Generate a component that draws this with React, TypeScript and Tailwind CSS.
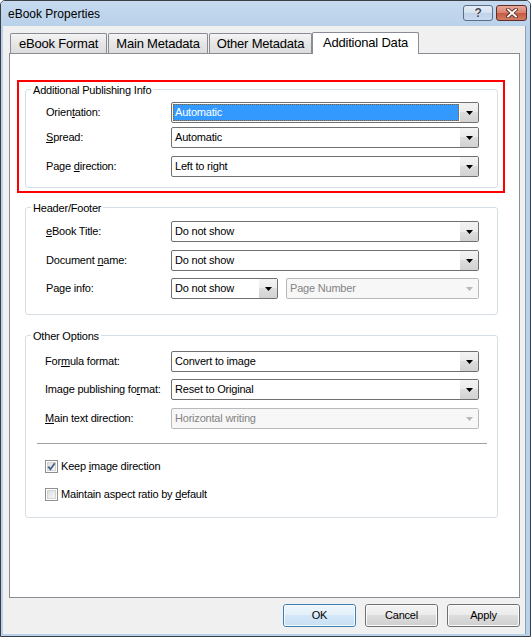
import React from "react";

const FONT = "font-['Liberation_Sans',Arial,sans-serif]";

function Mn({ children }: { children: React.ReactNode }) {
  return <span className="underline decoration-1 underline-offset-[1px]">{children}</span>;
}

function DownArrow({ disabled }: { disabled?: boolean }) {
  return (
    <svg width="7" height="4" viewBox="0 0 7 4" className="block">
      <path d="M0 0H7L3.5 4Z" fill={disabled ? "#b8b8b8" : "#000"} />
    </svg>
  );
}

function Combo({
  value,
  className,
  selected,
  disabled,
}: {
  value: string;
  className: string;
  selected?: boolean;
  disabled?: boolean;
}) {
  return (
    <div
      className={`flex h-[21px] shrink-0 rounded-[2px] border ${
        disabled ? "border-[#b6babd] bg-[#f7f7f7] text-[#848484]" : "border-[#707070] bg-white text-black"
      } ${className}`}
    >
      <div className="flex min-w-0 flex-1 p-px">
        <div
          className={`flex flex-1 items-center whitespace-nowrap ${
            selected ? "border border-dotted border-[#a05a00] bg-[#3399ff] pl-[1px] text-white" : "pl-[2px]"
          }`}
        >
          {value}
        </div>
      </div>
      <div
        className={`flex w-[18px] items-center justify-center ${
          disabled ? "bg-[#f7f7f7]" : "bg-[linear-gradient(#f3f3f3,#ebebeb_50%,#dddddd_50%,#d2d2d2)]"
        }`}
      >
        <DownArrow disabled={disabled} />
      </div>
    </div>
  );
}

function Group({
  title,
  className,
  children,
}: {
  title: string;
  className: string;
  children: React.ReactNode;
}) {
  return (
    <div className={`relative w-[473px] rounded-[3px] border border-[#d5dfe5] ${className}`}>
      <span className="absolute left-[5px] top-[-7px] bg-white px-[2px] leading-[14px]">{title}</span>
      {children}
    </div>
  );
}

function Row({
  label,
  children,
  className = "",
}: {
  label: React.ReactNode;
  children: React.ReactNode;
  className?: string;
}) {
  return (
    <div className={`flex items-center ${className}`}>
      <div className="w-[125px] shrink-0 whitespace-nowrap">{label}</div>
      {children}
    </div>
  );
}

function CheckBox({ checked, label, className = "" }: { checked?: boolean; label: React.ReactNode; className?: string }) {
  return (
    <div className={`flex h-[13px] items-center ${className}`}>
      <div className="flex h-[13px] w-[13px] shrink-0 border border-[#8e8f8f] bg-white p-px">
        <div className="relative flex-1 border border-[#d2d4d6] bg-[linear-gradient(135deg,#dcdee0,#f8f8f8)]">
          {checked && (
            <svg width="11" height="11" viewBox="0 0 11 11" className="absolute left-[-2px] top-[-2px]">
              <path d="M2.2 5.6L4.4 8.2L8.8 2.2" fill="none" stroke="#4f6489" strokeWidth="1.9" />
            </svg>
          )}
        </div>
      </div>
      <span className="ml-[3px] whitespace-nowrap">{label}</span>
    </div>
  );
}

function DialogButton({ children, primary }: { children: React.ReactNode; primary?: boolean }) {
  return (
    <div
      className={`flex h-[23px] w-[73px] items-center justify-center rounded-[3px] border ${
        primary
          ? "border-[#3c7fb1] bg-[linear-gradient(#eef6fc,#e2eff9_50%,#d3e7f7_50%,#c8e0f4)]"
          : "border-[#707070] bg-[linear-gradient(#f3f3f3,#ebebeb_50%,#dddddd_50%,#cfcfcf)]"
      }`}
    >
      <div
        className={`flex h-full w-full items-center justify-center rounded-[2px] border ${
          primary ? "border-[#f4faff]" : "border-[#fafafa]"
        }`}
      >
        {children}
      </div>
    </div>
  );
}

function Tab({ label, className }: { label: string; className: string }) {
  return (
    <div
      className={`flex h-[20px] shrink-0 items-center justify-center rounded-t-[2px] border border-b-0 border-[#898c95] bg-[linear-gradient(#f4f4f4,#e6e6e6_50%,#dcdcdc)] pb-[1px] text-[13px] ${className}`}
    >
      {label}
    </div>
  );
}

export default function App() {
  return (
    <div
      className={`${FONT} flex h-[637px] w-[531px] flex-col overflow-hidden rounded-t-[5px] border border-[#3a3f45] bg-[#b9d1ea] text-[11px] leading-[13px] tracking-[-0.2px] text-black`}
    >
      {/* title bar */}
      <div className="flex h-[25px] shrink-0 items-start bg-[linear-gradient(#c6daef,#b9d1ea)] pl-[7px] pr-[3px]">
        <div className="mt-[6px] text-[12px] leading-[14px] tracking-normal">eBook Properties</div>
        <div className="ml-auto mt-[4px] flex gap-[3px]">
          <div className="flex h-[16px] w-[30px] items-center justify-center rounded-[3px] border border-[#5c6e86] bg-[linear-gradient(#e4edf7,#d3e1f0_50%,#bfd2e8_50%,#c9dbef)]">
            <span className="text-[12px] font-bold leading-[12px] text-[#3c4652] [text-shadow:0_0_1px_#fff,0_0_1px_#fff]">
              ?
            </span>
          </div>
          <div className="flex h-[16px] w-[31px] items-center justify-center rounded-[3px] border border-[#5e2d25] bg-[linear-gradient(#e8a898,#d9806c_50%,#c65a43_50%,#d27a62)]">
            <svg width="12" height="10" viewBox="0 0 12 10" className="block">
              <path d="M2 1.5L10 8.5M10 1.5L2 8.5" stroke="#5a2a22" strokeWidth="3.6" strokeLinecap="square" />
              <path d="M2 1.5L10 8.5M10 1.5L2 8.5" stroke="#fff" strokeWidth="1.8" strokeLinecap="square" />
            </svg>
          </div>
        </div>
      </div>

      {/* frame + client area */}
      <div className="flex min-h-0 flex-1">
        <div className="w-[2px] shrink-0" />
        <div className="flex w-[522px] shrink-0 flex-col bg-[#f0f0f0] pt-[6px]">
          {/* tabs */}
          <div className="flex h-[21px] items-end pl-[7px]">
            <Tab label="eBook Format" className="w-[97px]" />
            <Tab label="Main Metadata" className="ml-[1px] w-[100px]" />
            <Tab label="Other Metadata" className="ml-[1px] w-[103px]" />
            <div className="relative z-10 -mb-px flex h-[22px] w-[107px] shrink-0 items-center justify-center rounded-t-[2px] border border-b-0 border-[#898c95] bg-white pb-[2px] text-[13px]">
              Additional Data
            </div>
          </div>

          {/* tab page */}
          <div className="ml-[6px] flex h-[545px] w-[511px] flex-col border border-[#898c95] bg-white">
            <div className="ml-[7px] mt-[26px] w-[488px] border-2 border-[#ff0000] pb-[3px] pt-[7px]">
              <Group title="Additional Publishing Info" className="ml-[6px] pb-[10px] pl-[20px] pt-[12px]">
                <Row
                  label={
                    <>
                      Orien<Mn>t</Mn>ation:
                    </>
                  }
                >
                  <Combo value="Automatic" selected className="w-[308px]" />
                </Row>
                <Row
                  className="mt-[4px]"
                  label={
                    <>
                      <Mn>S</Mn>pread:
                    </>
                  }
                >
                  <Combo value="Automatic" className="w-[308px]" />
                </Row>
                <Row
                  className="mt-[8px]"
                  label={
                    <>
                      Page <Mn>d</Mn>irection:
                    </>
                  }
                >
                  <Combo value="Left to right" className="w-[308px]" />
                </Row>
              </Group>
            </div>

            <Group title="Header/Footer" className="ml-[15px] mt-[14px] pb-[15px] pl-[20px] pt-[13px]">
              <Row
                label={
                  <>
                    <Mn>e</Mn>Book Title:
                  </>
                }
              >
                <Combo value="Do not show" className="w-[308px]" />
              </Row>
              <Row
                className="mt-[8px]"
                label={
                  <>
                    Document <Mn>n</Mn>ame:
                  </>
                }
              >
                <Combo value="Do not show" className="w-[308px]" />
              </Row>
              <Row className="mt-[7px]" label="Page info:">
                <Combo value="Do not show" className="w-[107px]" />
                <Combo value="Page Number" disabled className="ml-[8px] w-[193px]" />
              </Row>
            </Group>

            <Group title="Other Options" className="ml-[15px] mt-[20px] pb-[16px] pl-[19px] pt-[15px]">
              <Row
                label={
                  <>
                    For<Mn>m</Mn>ula format:
                  </>
                }
                className="[&>div:first-child]:w-[126px]"
              >
                <Combo value="Convert to image" className="w-[308px]" />
              </Row>
              <Row
                className="mt-[7px] [&>div:first-child]:w-[126px]"
                label={
                  <>
                    Image publishing fo<Mn>r</Mn>mat:
                  </>
                }
              >
                <Combo value="Reset to Original" className="w-[308px]" />
              </Row>
              <Row
                className="mt-[8px] [&>div:first-child]:w-[126px]"
                label={
                  <>
                    <Mn>M</Mn>ain text direction:
                  </>
                }
              >
                <Combo value="Horizontal writing" disabled className="w-[308px]" />
              </Row>
              <div className="-ml-[8px] mt-[14px] h-px w-[450px] bg-[#a0a0a0]" />
              <CheckBox
                checked
                className="mt-[16px]"
                label={
                  <>
                    Keep <Mn>i</Mn>mage direction
                  </>
                }
              />
              <CheckBox
                className="mt-[15px]"
                label={
                  <>
                    Maintain aspect ratio by <Mn>d</Mn>efault
                  </>
                }
              />
            </Group>
          </div>

          {/* dialog buttons */}
          <div className="mr-[5px] mt-[6px] flex justify-end gap-[9px]">
            <DialogButton primary>OK</DialogButton>
            <DialogButton>Cancel</DialogButton>
            <DialogButton>Apply</DialogButton>
          </div>
        </div>
        <div className="w-px shrink-0 bg-[#8d9fb3]" />
        <div className="flex-1" />
      </div>
      <div className="h-[2px] shrink-0" />
    </div>
  );
}
